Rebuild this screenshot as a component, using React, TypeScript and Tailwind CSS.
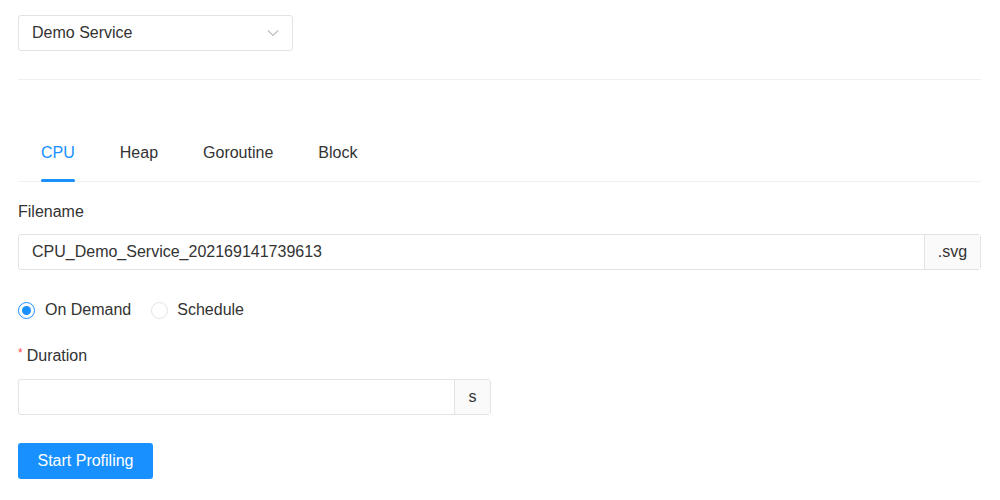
import React, { useState } from "react";

type Tab = "CPU" | "Heap" | "Goroutine" | "Block";

const tabs: Tab[] = ["CPU", "Heap", "Goroutine", "Block"];

const App: React.FC = () => {
  const [active, setActive] = useState<Tab>("CPU");
  const [mode, setMode] = useState<"demand" | "schedule">("demand");
  const [filename, setFilename] = useState("CPU_Demo_Service_202169141739613");
  const [duration, setDuration] = useState("");

  return (
    <div
      className="min-h-screen w-full bg-white px-[18px] pt-[15px] text-[16px] text-[#333]"
      style={{ fontFamily: '"Liberation Sans", Arial, sans-serif' }}
    >
      {/* SERVICE SELECT */}
      <div className="flex h-[36px] w-[275px] items-center justify-between rounded-[3px] border border-[#e3e3e3] pl-[13px] pr-[13px]">
        <span>Demo Service</span>
        <svg width="12" height="8" viewBox="0 0 12 8" fill="none">
          <path d="M1 1.5 L6 6.5 L11 1.5" stroke="#bfbfbf" strokeWidth="1.2" />
        </svg>
      </div>

      <div className="mt-[28px] h-px w-[963px] bg-[#f0f0f0]" />

      {/* TABS */}
      <div className="mt-[61px] flex w-[963px] border-b border-[#f0f0f0] pl-[23px]">
        {tabs.map((t) => (
          <button
            key={t}
            onClick={() => setActive(t)}
            className={`relative mr-[45px] pb-[16px] leading-[24px] ${
              active === t ? "text-[#1890ff]" : "text-[#333]"
            }`}
          >
            {t}
            {active === t && (
              <span className="absolute bottom-[-1px] left-0 h-[3px] w-full rounded-sm bg-[#1890ff]" />
            )}
          </button>
        ))}
      </div>

      {/* FILENAME */}
      <div className="mt-[18px] leading-[24px]">Filename</div>
      <div className="mt-[10px] flex h-[36px] w-[963px] rounded-[3px] border border-[#e3e3e3]">
        <input
          value={filename}
          onChange={(e) => setFilename(e.target.value)}
          className="flex-1 px-[13px] text-[#333] outline-none"
        />
        <div className="flex w-[56px] items-center justify-center border-l border-[#e3e3e3] bg-[#fafafa]">
          .svg
        </div>
      </div>

      {/* MODE */}
      <div className="mt-[28px] flex items-center leading-[24px]">
        <label className="flex cursor-pointer items-center" onClick={() => setMode("demand")}>
          <span
            className={`flex h-[17px] w-[17px] items-center justify-center rounded-full border ${
              mode === "demand" ? "border-[#1890ff]" : "border-[#e3e3e3]"
            }`}
          >
            {mode === "demand" && <span className="h-[9px] w-[9px] rounded-full bg-[#1890ff]" />}
          </span>
          <span className="ml-[10px]">On Demand</span>
        </label>
        <label className="ml-[20px] flex cursor-pointer items-center" onClick={() => setMode("schedule")}>
          <span
            className={`flex h-[17px] w-[17px] items-center justify-center rounded-full border ${
              mode === "schedule" ? "border-[#1890ff]" : "border-[#e3e3e3]"
            }`}
          >
            {mode === "schedule" && <span className="h-[9px] w-[9px] rounded-full bg-[#1890ff]" />}
          </span>
          <span className="ml-[9px]">Schedule</span>
        </label>
      </div>

      {/* DURATION */}
      <div className="mt-[22px] flex items-start leading-[24px]">
        <span className="mr-[4px] text-[12px] leading-[18px] text-[#ff4d4f]">*</span>
        Duration
      </div>
      <div className="mt-[11px] flex h-[36px] w-[473px] rounded-[3px] border border-[#e3e3e3]">
        <input
          value={duration}
          onChange={(e) => setDuration(e.target.value)}
          className="flex-1 px-[13px] text-[#333] outline-none"
        />
        <div className="flex w-[36px] items-center justify-center border-l border-[#e3e3e3] bg-[#fafafa]">
          s
        </div>
      </div>

      <button className="mt-[28px] h-[36px] w-[135px] rounded-[3px] bg-[#1890ff] text-white hover:bg-[#40a9ff]">
        Start Profiling
      </button>
    </div>
  );
};

export default App;
